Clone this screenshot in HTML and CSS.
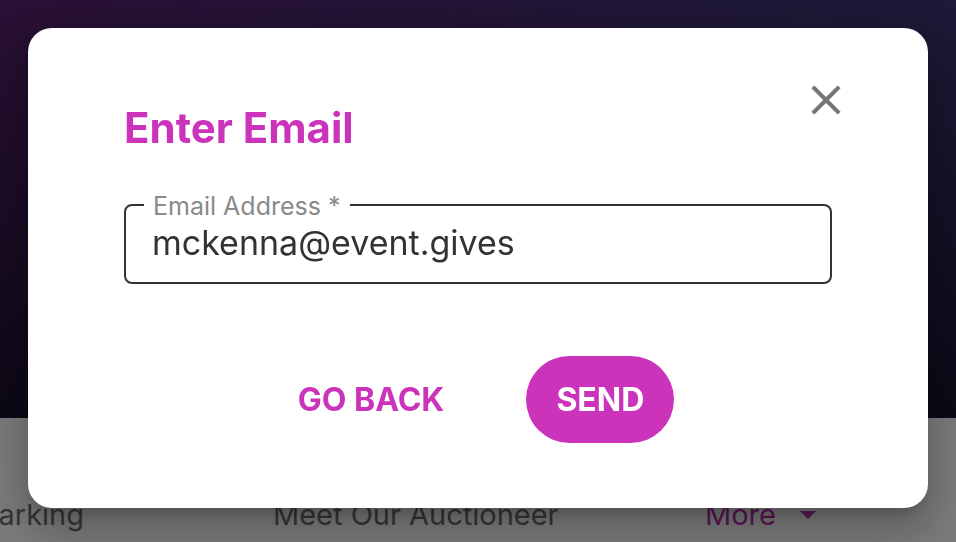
FILE: index.html
```html
<!DOCTYPE html>
<html lang="en">
<head>
    <meta charset="UTF-8">
    <meta name="viewport" content="width=device-width, initial-scale=1.0">
    <title>Enter Email</title>
    <link rel="stylesheet" href="styles.css">
</head>
<body>
    <div class="hero"></div>

    <nav class="tabs">
        <span class="tab">Parking</span>
        <span class="tab">Meet Our Auctioneer</span>
        <span class="tab tab-more">More <span class="caret"></span></span>
    </nav>

    <div class="backdrop"></div>

    <!-- Email dialog -->
    <div class="dialog" role="dialog">
        <button class="close" aria-label="Close">
            <svg viewBox="0 0 24 24" width="50" height="50">
                <path d="M19 6.41L17.59 5 12 10.59 6.41 5 5 6.41 10.59 12 5 17.59 6.41 19 12 13.41 17.59 19 19 17.59 13.41 12z" fill="#767676"/>
            </svg>
        </button>

        <h2 class="title">Enter Email</h2>

        <div class="field">
            <label for="email">Email Address *</label>
            <input id="email" type="email" value="mckenna@event.gives">
        </div>

        <div class="actions">
            <button class="btn btn-text">GO BACK</button>
            <button class="btn btn-fill">SEND</button>
        </div>
    </div>
</body>
</html>
```

FILE: styles.css
```css
body {
    font-family: Inter, 'Open Sans', sans-serif;
    margin: 0;
    padding: 0;
    background-color: #f5f5f5;
    height: 542px;
    overflow: hidden;
}

.hero {
    height: 418px;
    background:
        linear-gradient(180deg, rgba(24, 16, 42, 0) 0%, #18102a 100%),
        linear-gradient(90deg, #54206a 0%, #38346f 100%);
}

.tabs {
    display: grid;
    grid-template-columns: 293px 432px auto;
    margin-left: -20px;
    padding-top: 78px;
    font-size: 29px;
    line-height: 38px;
    color: #6a6a6a;
}

.tab-more {
    color: #b42aae;
    display: flex;
    align-items: center;
}

.caret {
    width: 0;
    height: 0;
    margin-left: 24px;
    border-left: 8px solid transparent;
    border-right: 8px solid transparent;
    border-top: 8px solid #b42aae;
}

.backdrop {
    position: fixed;
    top: 0;
    left: 0;
    width: 100%;
    height: 100%;
    background: rgba(0, 0, 0, 0.5);
}

.dialog {
    position: fixed;
    top: 28px;
    left: 28px;
    width: 900px;
    height: 480px;
    box-sizing: border-box;
    padding: 75px 96px 0 96px;
    background: #fff;
    border-radius: 24px;
    box-shadow: 0 11px 15px -7px rgba(0, 0, 0, 0.2), 0 24px 38px 3px rgba(0, 0, 0, 0.14), 0 9px 46px 8px rgba(0, 0, 0, 0.12);
}

.close {
    position: absolute;
    top: 47px;
    right: 77px;
    padding: 0;
    border: none;
    background: none;
    cursor: pointer;
}

.close svg {
    display: block;
}

.title {
    margin: 0;
    font-size: 42px;
    line-height: 50px;
    font-weight: 700;
    color: #cc33bb;
}

.field {
    position: relative;
    margin-top: 51px;
    height: 80px;
    box-sizing: border-box;
    border: 2px solid #333;
    border-radius: 8px;
    padding: 0 26px;
    display: flex;
    align-items: center;
}

.field label {
    position: absolute;
    top: -15px;
    left: 18px;
    padding: 0 9px;
    background: #fff;
    font-size: 25px;
    line-height: 30px;
    color: #8a8a8a;
}

.field input {
    width: 100%;
    border: none;
    outline: none;
    padding: 0 0 3px 0;
    background: transparent;
    font-family: inherit;
    font-size: 34px;
    color: #333;
}

.actions {
    display: flex;
    justify-content: center;
    gap: 66px;
    margin-top: 72px;
}

.btn {
    height: 87px;
    border: none;
    font-family: inherit;
    font-size: 32px;
    font-weight: 700;
    cursor: pointer;
}

.btn-text {
    padding: 0 16px;
    background: none;
    color: #cc33bb;
}

.btn-fill {
    padding: 0 30px;
    background: #cc33bb;
    color: #fff;
    border-radius: 44px;
}
```
